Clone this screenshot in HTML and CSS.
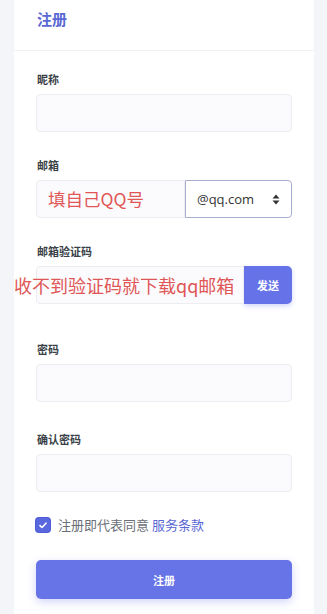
FILE: index.html
```html
<!DOCTYPE html>
<html lang="zh-CN">
<head>
<meta charset="utf-8">
<link rel="stylesheet" href="styles.css">
</head>
<body>
<div class="card">
  <div class="card-header">注册</div>
  <div class="card-body">
    <div class="field">
      <div class="label">昵称</div>
      <div class="input"></div>
    </div>
    <div class="field">
      <div class="label">邮箱</div>
      <div class="group">
        <div class="input grow"><span class="note">填自己QQ号</span></div>
        <div class="select">@qq.com
          <svg class="caret" width="8" height="11" viewBox="0 0 8 11"><path d="M4 0.5 L7.5 4.5 H0.5 Z M4 10.5 L7.5 6.5 H0.5 Z" fill="#333"/></svg>
        </div>
      </div>
    </div>
    <div class="field">
      <div class="label">邮箱验证码</div>
      <div class="group">
        <div class="input grow code"><span class="note overlay">收不到验证码就下载qq邮箱</span></div>
        <div class="send">发送</div>
      </div>
    </div>
    <div class="field f-pass">
      <div class="label">密码</div>
      <div class="input"></div>
    </div>
    <div class="field f-confirm">
      <div class="label">确认密码</div>
      <div class="input"></div>
    </div>
    <div class="agree">
      <span class="check"><svg width="8" height="7" viewBox="0 0 8 7"><path d="M1 3.6 L3 5.5 L7 1.2" fill="none" stroke="#fff" stroke-width="1.6" stroke-linecap="round" stroke-linejoin="round"/></svg></span>
      <span>注册即代表同意 <span class="link">服务条款</span></span>
    </div>
    <div class="submit">注册</div>
  </div>
</div>
</body>
</html>
```
FILE: styles.css
```css
html, body {
  margin: 0;
  padding: 0;
  background: #f4f5f9;
  font-family: "Noto Sans CJK SC", "Noto Sans", sans-serif;
}
.card {
  margin-left: 14px;
  width: 300px;
  background: #fff;
  min-height: 614px;
}
.card-header {
  padding: 9px 22px 21px 23px;
  font-size: 15px;
  line-height: 20px;
  font-weight: 700;
  color: #5a68d3;
  border-bottom: 1px solid #f1f2f5;
}
.card-body {
  padding: 20px 22px 0 22px;
}
.field {
  margin-bottom: 25px;
}
.field.f-pass { margin-top: 37px; }
.field.f-confirm { margin-top: 29px; }
.field.f-pass, .field.f-confirm { margin-bottom: 0; }
.label {
  font-size: 11px;
  line-height: 16px;
  font-weight: 700;
  color: #3a3f47;
  margin: 0 0 7px 1px;
}
.input {
  height: 38px;
  box-sizing: border-box;
  background: #fbfbfd;
  border: 1px solid #ececf1;
  border-radius: 4px;
}
.group {
  display: flex;
  height: 38px;
}
.group .input.grow {
  flex: 1;
  border-radius: 4px 0 0 4px;
  display: flex;
  align-items: center;
  position: relative;
}
.note {
  color: #e05656;
  font-size: 17.5px;
  line-height: 24px;
  font-weight: 400;
  padding-left: 11px;
}
.note.overlay {
  position: absolute;
  left: -23px;
  top: 6px;
  padding-left: 0;
  white-space: nowrap;
  font-size: 18px;
}
.select {
  width: 107px;
  box-sizing: border-box;
  border: 1px solid #a9adcf;
  border-radius: 0 4px 4px 0;
  background: #fff;
  display: flex;
  align-items: center;
  padding: 0 11px 0 11px;
  font-family: "Open Sans", "Noto Sans", sans-serif;
  font-size: 13px;
  color: #333;
  justify-content: space-between;
}
.send {
  width: 48px;
  background: #6673e8;
  border-radius: 0 5px 5px 0;
  color: #fff;
  font-size: 11px;
  font-weight: 700;
  display: flex;
  align-items: center;
  justify-content: center;
  box-shadow: 0 2px 5px rgba(102, 115, 232, 0.3);
}
.agree {
  margin-top: 23px;
  display: flex;
  align-items: center;
  gap: 8px;
  font-size: 13px;
  line-height: 20px;
  color: #6b6f78;
}
.check {
  width: 14px;
  height: 14px;
  border-radius: 3px;
  background: #5a68e0;
  display: flex;
  align-items: center;
  justify-content: center;
  box-shadow: 0 0 0 1px #4d5bd4;
}
.link {
  color: #5a68d3;
}
.submit {
  margin-top: 25px;
  height: 39px;
  background: #6674e8;
  border-radius: 5px;
  color: #fff;
  font-size: 11px;
  font-weight: 700;
  display: flex;
  align-items: center;
  justify-content: center;
  box-shadow: 0 3px 8px rgba(102, 116, 232, 0.3);
}
```
